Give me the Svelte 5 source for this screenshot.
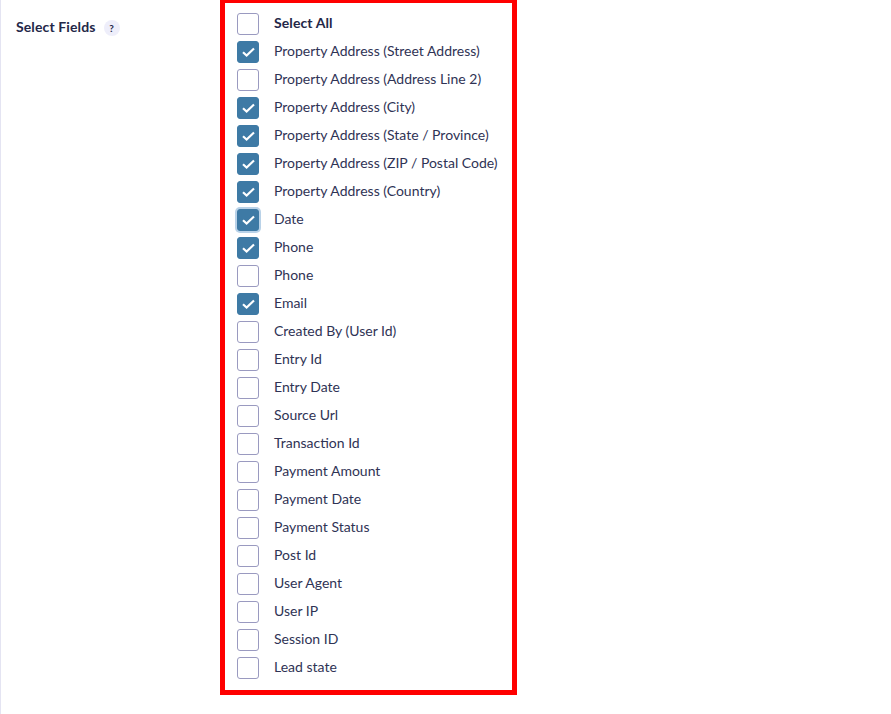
<script lang="ts">
	const fields = [
		['Property Address (Street Address)', true],
		['Property Address (Address Line 2)', false],
		['Property Address (City)', true],
		['Property Address (State / Province)', true],
		['Property Address (ZIP / Postal Code)', true],
		['Property Address (Country)', true],
		['Date', true, true],
		['Phone', true],
		['Phone', false],
		['Email', true],
		['Created By (User Id)', false],
		['Entry Id', false],
		['Entry Date', false],
		['Source Url', false],
		['Transaction Id', false],
		['Payment Amount', false],
		['Payment Date', false],
		['Payment Status', false],
		['Post Id', false],
		['User Agent', false],
		['User IP', false],
		['Session ID', false],
		['Lead state', false],
	]
</script>

<div class="page">
	<div class="label">
		<span>Select Fields</span>
		<span class="help">?</span>
	</div>
	<div class="box">
		<div class="row all">
			<span class="check"></span>
			<span class="name">Select All</span>
		</div>
		{#each fields as [name, checked, focused]}
			<div class="row">
				<span class="check" class:checked class:focused>
					{#if checked}
						<svg width="13" height="10" viewBox="0 0 13 10" fill="none">
							<path d="M1 5.2 4.6 8.5 12 1.5" stroke="#fff" stroke-width="2.2" />
						</svg>
					{/if}
				</span>
				<span class="name">{name}</span>
			</div>
		{/each}
	</div>
</div>

<style>
	:global(body) {
		background: #fff;
	}
	.page {
		display: flex;
		height: 714px;
		box-sizing: border-box;
		border-left: 1px solid #e4e4f2;
		font-family: Lato, 'Open Sans', sans-serif;
		overflow: hidden;
	}
	.label {
		width: 219px;
		box-sizing: border-box;
		padding: 18px 0 0 15px;
		display: flex;
		align-items: flex-start;
		gap: 8px;
		font-size: 14px;
		line-height: 17px;
		font-weight: 700;
		letter-spacing: 0.12px;
		color: #242748;
	}
	.help {
		width: 16px;
		height: 16px;
		margin-top: 2px;
		border-radius: 50%;
		background: #eeeefa;
		font-size: 10px;
		line-height: 16px;
		text-align: center;
	}
	.box {
		width: 297px;
		height: 697px;
		margin-top: -2px;
		box-sizing: border-box;
		border: 5px solid #f00;
		padding: 7px 0 0 12px;
	}
	.row {
		display: flex;
		align-items: center;
		height: 28px;
		gap: 15px;
		font-size: 14px;
		color: #2f3355;
	}
	.row.all {
		font-weight: 700;
		letter-spacing: 0.1px;
		color: #242748;
	}
	.name {
		padding-bottom: 4px;
	}
	.check {
		width: 22px;
		height: 22px;
		box-sizing: border-box;
		border: 1px solid #9a9ac0;
		border-radius: 3px;
		background: #fff;
		display: flex;
		align-items: center;
		justify-content: center;
	}
	.check.checked {
		background: #3e7aa5;
		border-color: #3e7aa5;
	}
	.check.focused {
		box-shadow: 0 0 0 2px #b9d2e8;
	}
</style>
